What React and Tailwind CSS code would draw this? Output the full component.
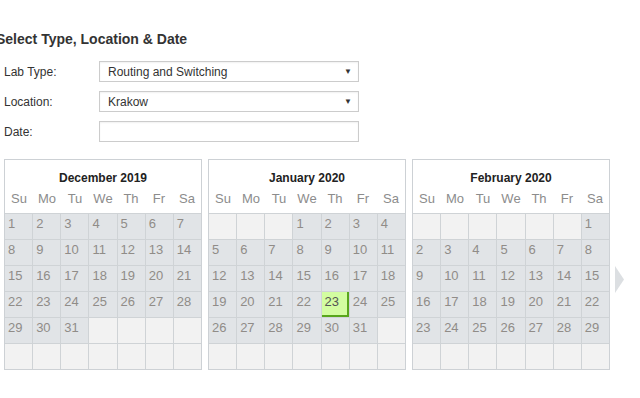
import React from 'react';

const weekdays = ['Su', 'Mo', 'Tu', 'We', 'Th', 'Fr', 'Sa'];

const months = [
  { title: 'December 2019', offset: 0, days: 31 },
  { title: 'January 2020', offset: 3, days: 31, selected: 23 },
  { title: 'February 2020', offset: 6, days: 29 },
];

function Calendar({ title, offset, days, selected }) {
  const cells = [];
  for (let i = 0; i < 42; i++) {
    const d = i - offset + 1;
    cells.push(d >= 1 && d <= days ? d : null);
  }

  return (
    <div className="w-[198px] border border-[#cdd1d5] bg-white">
      <div className="h-[53px] flex flex-col">
        <div className="pt-[11px] h-[31px] text-center text-[12px] font-bold text-[#222] leading-[14px]">
          {title}
        </div>
        <div className="grid grid-cols-7 text-[13px] leading-[15px] text-[#8c8c8c]">
          {weekdays.map((w) => (
            <div key={w} className="text-center">{w}</div>
          ))}
        </div>
      </div>
      <div className="grid grid-cols-7 gap-px bg-[#cfd3d6] pt-px">
        {cells.map((d, i) =>
          d === null ? (
            <div key={i} className="h-[25px] bg-[#f2f2f2]" />
          ) : d === selected ? (
            <div
              key={i}
              className="h-[25px] bg-[#d3fda1] border-r-2 border-b-2 border-[#58a61c] pl-[3px] pt-[2px] text-[13px] leading-[15px] text-[#555]"
            >
              {d}
            </div>
          ) : (
            <div
              key={i}
              className="h-[25px] bg-[#e1e4e7] pl-[3px] pt-[2px] text-[13px] leading-[15px] text-[#908c88]"
            >
              {d}
            </div>
          )
        )}
      </div>
    </div>
  );
}

function Field({ label, value, select }) {
  return (
    <div className="flex items-center h-[21px]">
      <div className="w-[99px] pl-[4px] text-[12px] text-[#333]">{label}</div>
      <div className="w-[260px] h-[21px] border border-[#cccccc] bg-white flex items-center justify-between pl-[8px] pr-[6px] text-[12px] text-[#333] shadow-[inset_0_1px_2px_rgba(0,0,0,0.06)]">
        <span>{value}</span>
        {select && <span className="text-[8px] text-[#333]">▼</span>}
      </div>
    </div>
  );
}

export default function App() {
  return (
    <div className="w-[640px] h-[398px] bg-white overflow-hidden font-['Liberation_Sans',Arial,sans-serif]">
      <div className="pt-[29px]">
        <h2 className="-ml-[4px] text-[14px] leading-[20px] font-bold text-[#333]">
          Select Type, Location &amp; Date
        </h2>

        <div className="mt-[12px] flex flex-col gap-[9px]">
          <Field label="Lab Type:" value="Routing and Switching" select />
          <Field label="Location:" value="Krakow" select />
          <Field label="Date:" value="" />
        </div>

        <div className="mt-[17px] pl-[4px] flex gap-[6px]">
          {months.map((m) => (
            <Calendar key={m.title} {...m} />
          ))}
          <div className="mt-[107px] -ml-[1px]">
            <svg width="9" height="27" viewBox="0 0 9 27">
              <polygon points="0,0 9,13.5 0,27" fill="#dcdfe2" />
            </svg>
          </div>
        </div>
      </div>
    </div>
  );
}
